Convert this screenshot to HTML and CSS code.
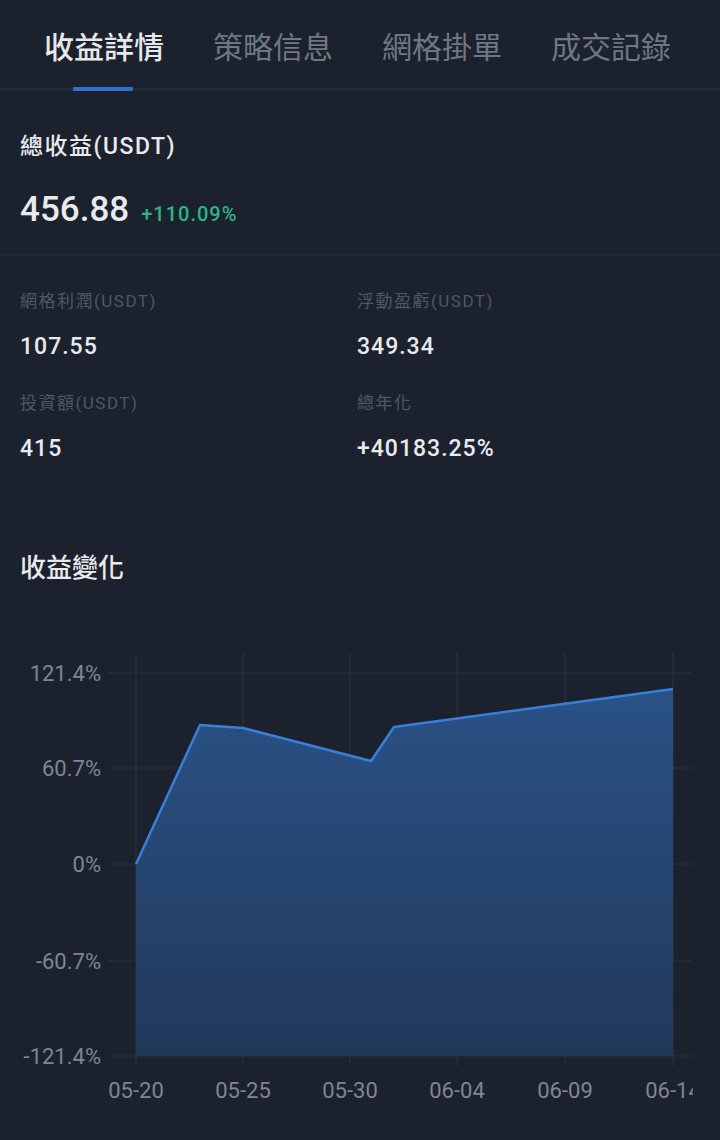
FILE: index.html
```html
<!DOCTYPE html>
<html lang="zh-Hant">

<head>
    <meta charset="UTF-8">
    <meta name="viewport" content="width=device-width, initial-scale=1.0">
    <title>收益詳情</title>
    <link rel="stylesheet" href="styles.css">
</head>

<body>
    <!-- 顶部标签 -->
    <nav class="tabs">
        <div class="tab active">收益詳情</div>
        <div class="tab">策略信息</div>
        <div class="tab">網格掛單</div>
        <div class="tab">成交記錄</div>
    </nav>

    <!-- 总收益 -->
    <section class="summary">
        <div class="summary-title">總收益(USDT)</div>
        <div class="summary-value">
            <span class="total">456.88</span>
            <span class="rate">+110.09%</span>
        </div>
    </section>

    <!-- 明细 -->
    <section class="stats">
        <div class="stat">
            <div class="stat-label">網格利潤(USDT)</div>
            <div class="stat-value">107.55</div>
        </div>
        <div class="stat">
            <div class="stat-label">浮動盈虧(USDT)</div>
            <div class="stat-value">349.34</div>
        </div>
        <div class="stat">
            <div class="stat-label">投資額(USDT)</div>
            <div class="stat-value">415</div>
        </div>
        <div class="stat">
            <div class="stat-label">總年化</div>
            <div class="stat-value">+40183.25%</div>
        </div>
    </section>

    <h3 class="chart-title">收益變化</h3>

    <!-- 收益曲线 -->
    <svg class="chart" width="720" height="480" viewBox="0 640 720 480">
        <defs>
            <linearGradient id="areaFill" x1="0" y1="0" x2="0" y2="1">
                <stop offset="0" stop-color="#2a5287" />
                <stop offset="1" stop-color="#21385a" />
            </linearGradient>
            <clipPath id="plotClip">
                <rect x="0" y="640" width="693" height="480" />
            </clipPath>
        </defs>

        <g class="grid">
            <line x1="108" y1="673" x2="693" y2="673" />
            <line x1="108" y1="768" x2="693" y2="768" />
            <line x1="108" y1="864" x2="693" y2="864" />
            <line x1="108" y1="961" x2="693" y2="961" />
            <line x1="108" y1="1056" x2="693" y2="1056" />
            <line x1="136" y1="653" x2="136" y2="1066" />
            <line x1="243" y1="653" x2="243" y2="1066" />
            <line x1="350" y1="653" x2="350" y2="1066" />
            <line x1="457" y1="653" x2="457" y2="1066" />
            <line x1="565" y1="653" x2="565" y2="1066" />
            <line x1="673" y1="653" x2="673" y2="1066" />
        </g>

        <polygon class="area" points="136,864 200,725 243,728 371,761 394,727 673,689 673,1056 136,1056" />
        <polyline class="line" points="136,864 200,725 243,728 371,761 394,727 673,689" />

        <g class="y-labels">
            <text x="101" y="681">121.4%</text>
            <text x="101" y="776">60.7%</text>
            <text x="101" y="872">0%</text>
            <text x="101" y="969">-60.7%</text>
            <text x="101" y="1064">-121.4%</text>
        </g>

        <g class="x-labels" clip-path="url(#plotClip)">
            <text x="136" y="1098">05-20</text>
            <text x="243" y="1098">05-25</text>
            <text x="350" y="1098">05-30</text>
            <text x="457" y="1098">06-04</text>
            <text x="565" y="1098">06-09</text>
            <text x="673" y="1098">06-14</text>
        </g>
    </svg>
</body>

</html>
```

FILE: styles.css
```css
/* 深色主题 */
body {
    margin: 0;
    background-color: #1b222d;
    color: #e8eaee;
    font-family: Roboto, "Noto Sans CJK TC", sans-serif;
    width: 720px;
    overflow: hidden;
}

/* 标签栏 */
.tabs {
    display: flex;
    gap: 49px;
    padding-left: 44px;
    height: 90px;
    border-bottom: 2px solid #262d38;
    align-items: center;
    box-sizing: border-box;
}

.tab {
    position: relative;
    font-family: "Noto Sans CJK TC", sans-serif;
    font-size: 30px;
    line-height: 40px;
    color: #6f7782;
    margin-top: 2px;
}

.tab.active {
    color: #e6e8eb;
    font-weight: 500;
}

.tab.active::after {
    content: "";
    position: absolute;
    left: 29px;
    width: 60px;
    height: 4px;
    bottom: -26px;
    background-color: #2e6fd0;
    border-radius: 1px;
}

/* 总收益 */
.summary {
    padding: 42px 20px 18px;
    border-bottom: 2px solid #222a36;
}

.summary-title {
    font-size: 23px;
    line-height: 30px;
    font-weight: 500;
    letter-spacing: 1.5px;
}

.summary-value {
    margin-top: 26px;
    line-height: 44px;
    display: flex;
    align-items: baseline;
    gap: 12px;
}

.total {
    font-size: 35px;
    font-weight: 500;
}

.rate {
    font-size: 20px;
    font-weight: 500;
    letter-spacing: 1px;
    color: #2bb685;
}

/* 明细 */
.stats {
    display: grid;
    grid-template-columns: 337px 1fr;
    row-gap: 29px;
    padding: 33px 20px 0;
}

.stat-label {
    font-size: 17px;
    line-height: 24px;
    letter-spacing: 1.5px;
    color: #4f5764;
}

.stat-value {
    margin-top: 19px;
    font-size: 23px;
    line-height: 30px;
    font-weight: 500;
    letter-spacing: 1px;
}

.chart-title {
    margin: 87px 0 0;
    padding-left: 20px;
    font-size: 26px;
    line-height: 34px;
    font-weight: 500;
}

/* 图表 */
.chart {
    display: block;
    margin-top: 55px;
}

.grid line {
    stroke: #262e3a;
    stroke-width: 1.5;
}

.area {
    fill: url(#areaFill);
}

.line {
    fill: none;
    stroke: #3a7edb;
    stroke-width: 2.5;
    stroke-linejoin: round;
}

.y-labels text,
.x-labels text {
    font-family: Roboto, sans-serif;
    font-size: 22px;
    fill: #7e8691;
}

.y-labels text {
    text-anchor: end;
}

.x-labels text {
    text-anchor: middle;
}
```
